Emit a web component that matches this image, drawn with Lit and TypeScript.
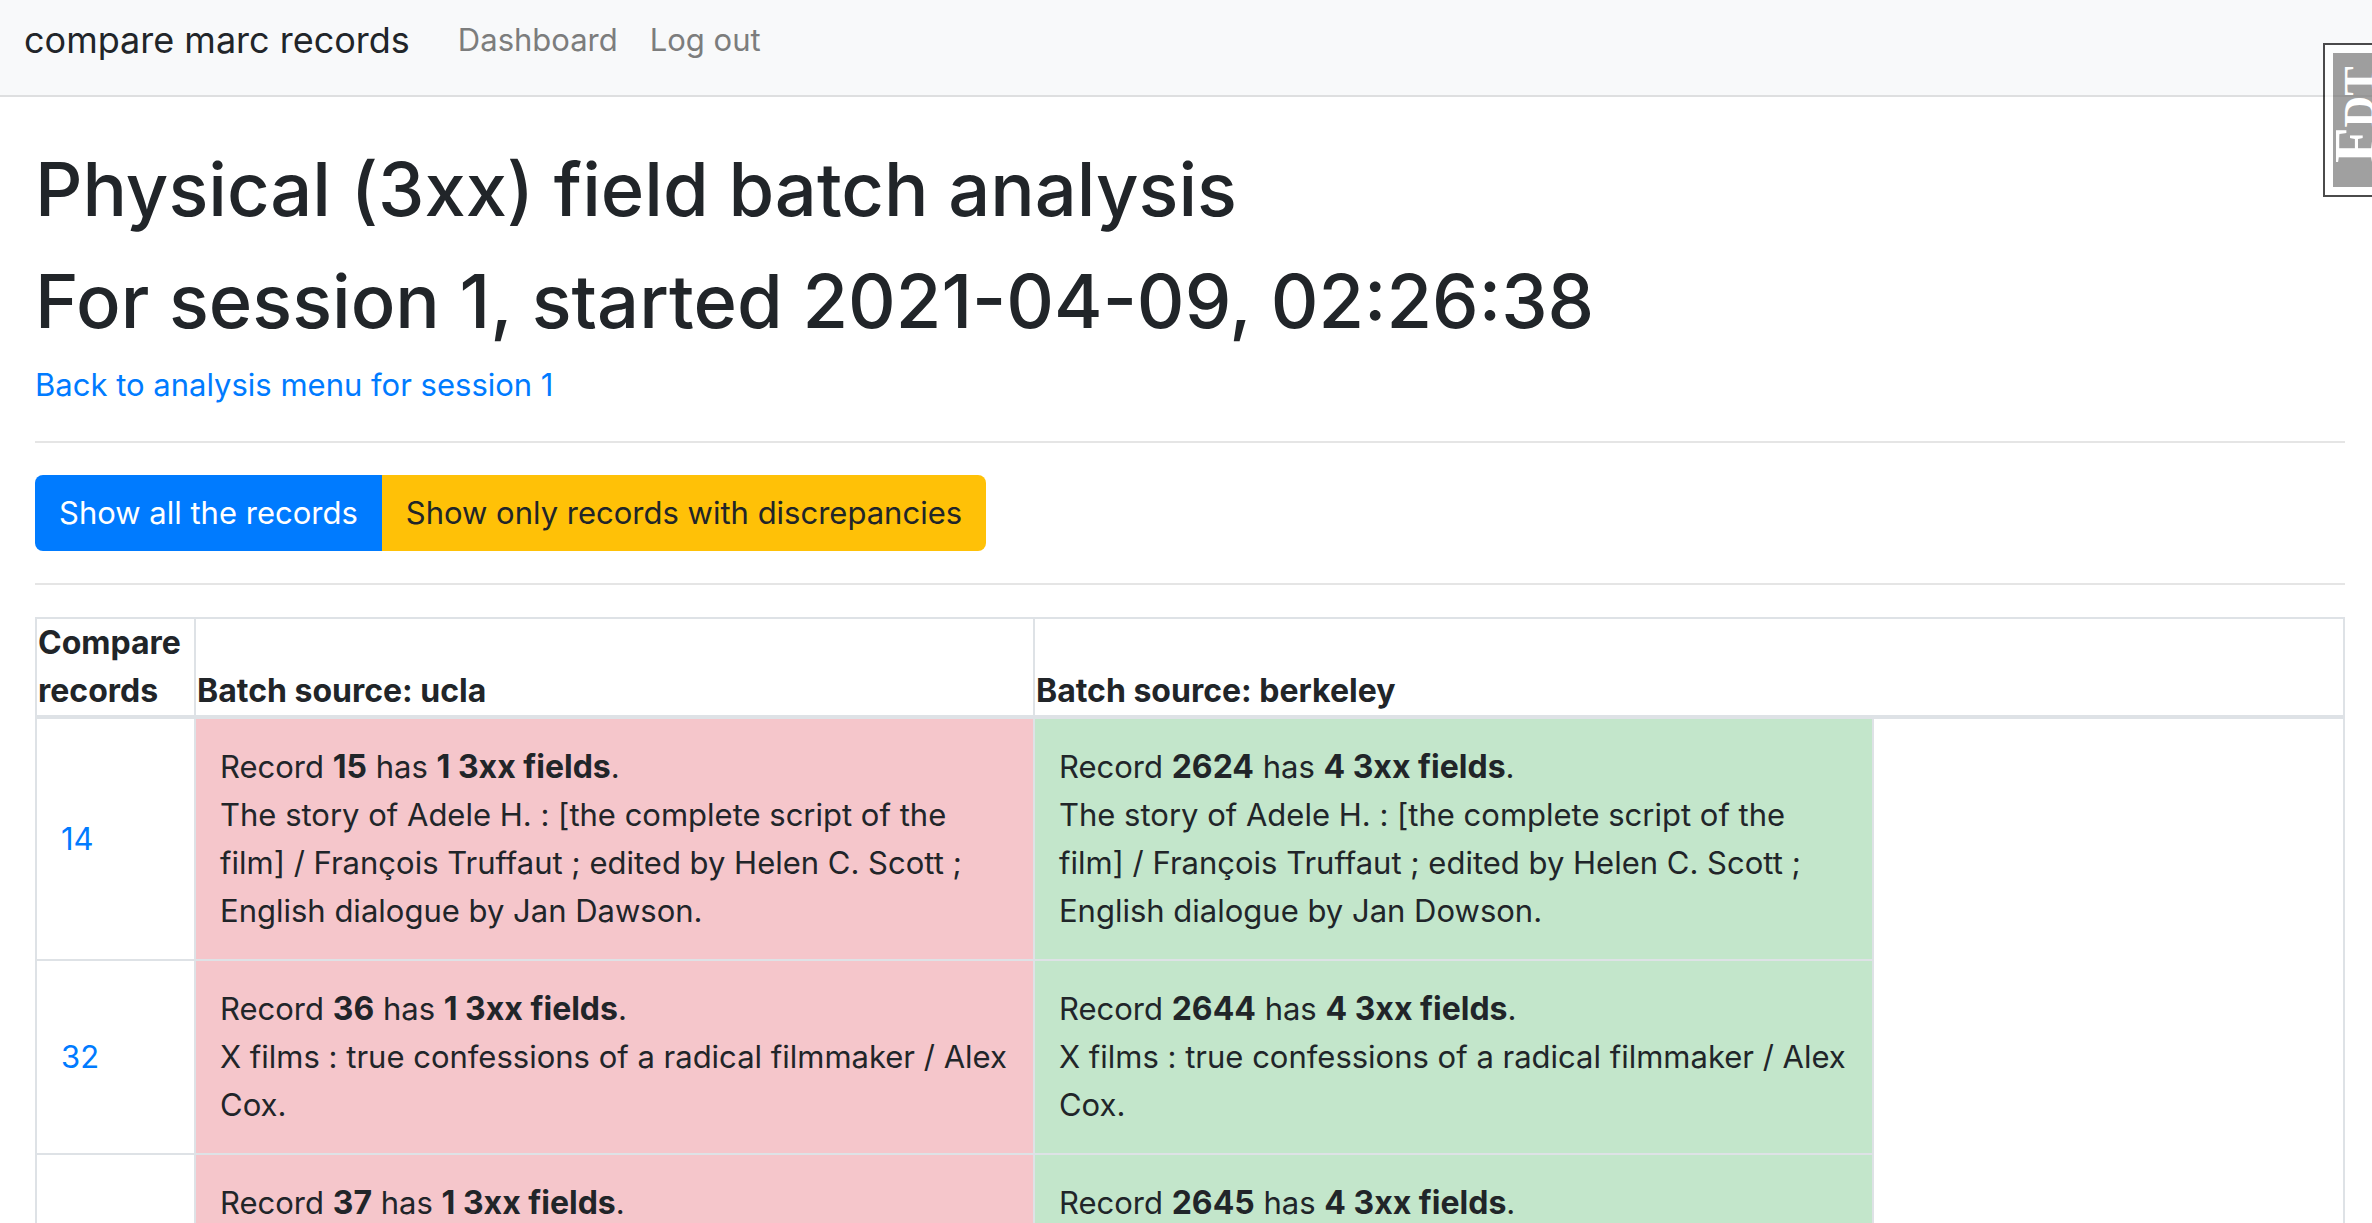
import { LitElement, html, css } from "lit";
import { customElement, property } from "lit/decorators.js";

interface MarcRecord {
  id: number;
  fields: number;
  title?: string;
}

interface Comparison {
  id?: number;
  ucla: MarcRecord;
  berkeley: MarcRecord;
}

const filmTitle = "X films : true confessions of a radical filmmaker / Alex Cox.";

const comparisons: Comparison[] = [
  {
    id: 14,
    ucla: {
      id: 15,
      fields: 1,
      title:
        "The story of Adele H. : [the complete script of the film] / François Truffaut ; edited by Helen C. Scott ; English dialogue by Jan Dawson.",
    },
    berkeley: {
      id: 2624,
      fields: 4,
      title:
        "The story of Adele H. : [the complete script of the film] / François Truffaut ; edited by Helen C. Scott ; English dialogue by Jan Dowson.",
    },
  },
  {
    id: 32,
    ucla: { id: 36, fields: 1, title: filmTitle },
    berkeley: { id: 2644, fields: 4, title: filmTitle },
  },
  {
    ucla: { id: 37, fields: 1 },
    berkeley: { id: 2645, fields: 4 },
  },
];

@customElement("site-nav")
export class SiteNav extends LitElement {
  static styles = css`
    :host {
      display: block;
    }
    .bar {
      display: flex;
      align-items: center;
      padding: 10px 24px 25px;
      background: #f8f9fa;
      border-bottom: 2px solid #dedfe0;
    }
    .brand {
      margin-right: 48px;
      color: #212529;
      font-size: 36px;
      line-height: 60px;
      text-decoration: none;
    }
    .link {
      margin-right: 32px;
      color: #7c7d7d;
      text-decoration: none;
    }
  `;

  render() {
    return html`
      <nav class="bar">
        <a class="brand" href="#">compare marc records</a>
        <a class="link" href="#dashboard">Dashboard</a>
        <a class="link" href="#logout">Log out</a>
      </nav>
    `;
  }
}

@customElement("records-table")
export class RecordsTable extends LitElement {
  @property({ attribute: false }) rows: Comparison[] = [];

  static styles = css`
    :host {
      display: block;
    }
    .table {
      width: 100%;
      table-layout: fixed;
      border-collapse: collapse;
      border: 2px solid #dee2e6;
    }
    .col-id {
      width: 159px;
    }
    .col-batch {
      width: 36.35%;
    }
    .head {
      padding: 0 0 0 1px;
      border: 2px solid #dee2e6;
      border-bottom-width: 4px;
      font-size: 32px;
      font-weight: 700;
      text-align: left;
      vertical-align: bottom;
    }
    .cell {
      padding: 24px;
      border: 2px solid #dee2e6;
      vertical-align: middle;
    }
    .strong {
      font-size: 32px;
      line-height: 1;
      font-weight: 700;
    }
    .fewer {
      background: #f5c6cb;
    }
    .more {
      background: #c3e6cb;
    }
    .link {
      color: #007bff;
      text-decoration: none;
    }
  `;

  private record(r: MarcRecord, tone: string) {
    return html`<td class="cell ${tone}">
      Record <b class="strong">${r.id}</b> has <b class="strong">${r.fields} 3xx fields</b>.<br />${r.title}
    </td>`;
  }

  render() {
    return html`
      <table class="table">
        <colgroup>
          <col class="col-id" />
          <col class="col-batch" />
          <col class="col-batch" />
          <col />
        </colgroup>
        <thead>
          <tr>
            <th class="head" scope="col">Compare records</th>
            <th class="head" scope="col">Batch source: ucla</th>
            <th class="head" scope="col" colspan="2">Batch source: berkeley</th>
          </tr>
        </thead>
        <tbody>
          ${this.rows.map(
            (row) => html`<tr>
              <td class="cell">
                ${row.id ? html`<a class="link" href="#compare-${row.id}">${row.id}</a>` : ""}
              </td>
              ${this.record(row.ucla, "fewer")} ${this.record(row.berkeley, "more")}
            </tr>`
          )}
        </tbody>
      </table>
    `;
  }
}

@customElement("debug-handle")
export class DebugHandle extends LitElement {
  static styles = css`
    :host {
      display: block;
      width: 49px;
      box-sizing: border-box;
      padding: 8px 0 8px 8px;
      border: 2px solid #000;
      border-right: 0;
      background: #fff;
      opacity: 0.7;
      overflow: hidden;
    }
    .label {
      display: block;
      height: 134px;
      width: 44px;
      box-sizing: border-box;
      padding-top: 24px;
      background: #787878;
      color: #fff;
      font-family: "Liberation Serif", serif;
      font-size: 58px;
      font-weight: 700;
      line-height: 44px;
      text-decoration: none;
      white-space: nowrap;
      writing-mode: vertical-rl;
      text-orientation: sideways;
      transform: rotate(180deg);
    }
    .small {
      font-size: 44px;
    }
  `;

  render() {
    return html`<a class="label" href="#toolbar">F<span class="small">DT</span></a>`;
  }
}

@customElement("app-root")
export class AppRoot extends LitElement {
  static styles = css`
    :host {
      display: block;
      position: relative;
      height: 100vh;
      overflow: hidden;
      background: #fff;
      color: #212529;
      font-family: Inter, "Liberation Sans", sans-serif;
      font-size: 31px;
      line-height: 48px;
    }
    .content {
      padding: 44px 27px 0 35px;
    }
    .heading {
      display: flex;
      flex-direction: column;
      gap: 16px;
      margin-bottom: 12px;
    }
    .title {
      margin: 0;
      font-size: 74px;
      font-weight: 500;
      line-height: 96px;
    }
    .back {
      color: #007bff;
      text-decoration: none;
    }
    .rule {
      height: 2px;
      margin: 32px 0;
      border: 0;
      background: #e5e5e5;
    }
    .group {
      display: flex;
    }
    .button {
      padding: 14px 24px;
      border: 0;
      color: #fff;
      background: #007bff;
      border-radius: 8px 0 0 8px;
      font: inherit;
    }
    .warning {
      color: #212529;
      background: #ffc107;
      border-radius: 0 8px 8px 0;
    }
    .handle {
      position: absolute;
      top: 43px;
      right: 0;
    }
  `;

  render() {
    return html`
      <site-nav></site-nav>
      <main class="content">
        <div class="heading">
          <h1 class="title">Physical (3xx) field batch analysis</h1>
          <h1 class="title">For session 1, started 2021-04-09, 02:26:38</h1>
        </div>
        <div><a class="back" href="#menu">Back to analysis menu for session 1</a></div>
        <hr class="rule" />
        <div class="group">
          <button class="button" type="button">Show all the records</button>
          <button class="button warning" type="button">Show only records with discrepancies</button>
        </div>
        <hr class="rule" />
        <records-table .rows=${comparisons}></records-table>
      </main>
      <debug-handle class="handle"></debug-handle>
    `;
  }
}
